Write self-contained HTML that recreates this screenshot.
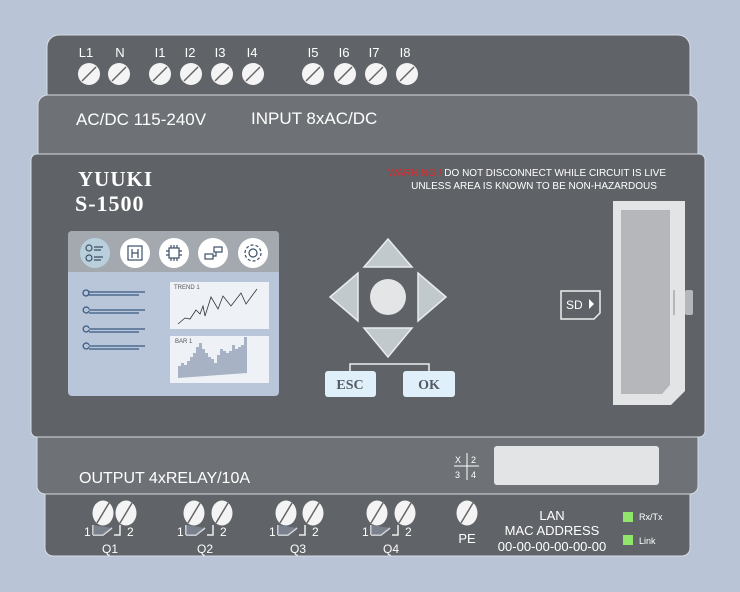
<!DOCTYPE html>
<html><head><meta charset="utf-8"><style>
html,body{margin:0;padding:0;background:#b9c4d7;}
svg{display:block}
text{font-family:"Liberation Sans Narrow","Liberation Sans",sans-serif;fill:#fff}
.s{font-family:"Liberation Serif",serif;font-weight:bold}
</style></head><body>
<svg width="740" height="592" viewBox="0 0 740 592" xmlns="http://www.w3.org/2000/svg">
<defs>
<g id="t"><circle r="11" fill="#f4f4f4"/><line x1="-7" y1="7" x2="7" y2="-7" stroke="#666" stroke-width="1.5"/></g>
<g id="b"><ellipse rx="10.5" ry="12.5" fill="#f4f4f4"/><line x1="-6" y1="10" x2="6" y2="-10" stroke="#666" stroke-width="1.5"/></g>
<g id="r"><text x="-31" y="28" font-size="12">1</text><path d="M-22 27 V17 M-22 27 H-12 L-3 20 M-1 27 H5 V17" stroke="#eee" stroke-width="1.5" fill="none"/><path d="M-22 17 V27 H-12 L-3 20 Z" fill="#8c95a6" opacity=".6"/><text x="12" y="28" font-size="12">2</text></g>
</defs>
<rect x="47" y="35" width="643" height="70" rx="12" fill="#606468" stroke="#d8dce3" stroke-width="1"/>
<g transform="translate(0,74)">
<use href="#t" x="89"/><use href="#t" x="119"/><use href="#t" x="160"/><use href="#t" x="191"/><use href="#t" x="222"/><use href="#t" x="253"/><use href="#t" x="313"/><use href="#t" x="345"/><use href="#t" x="376"/><use href="#t" x="407"/>
</g>
<g font-size="13" text-anchor="middle">
<text x="86" y="57">L1</text><text x="120" y="57">N</text><text x="160" y="57">I1</text><text x="190" y="57">I2</text><text x="220" y="57">I3</text><text x="252" y="57">I4</text><text x="313" y="57">I5</text><text x="344" y="57">I6</text><text x="374" y="57">I7</text><text x="405" y="57">I8</text>
</g>
<rect x="38" y="95" width="660" height="75" rx="10" fill="#6e7276" stroke="#d8dce3"/>
<text x="76" y="125" font-size="17">AC/DC 115-240V</text>
<text x="251" y="124" font-size="17">INPUT 8xAC/DC</text>
<rect x="45" y="480" width="645" height="76" rx="8" fill="#606468" stroke="#d8dce3"/>
<rect x="37" y="420" width="661" height="74" rx="8" fill="#6e7276" stroke="#d8dce3"/>
<rect x="31" y="154" width="674" height="283" rx="6" fill="#5f6367" stroke="#d8dce3"/>
<text class="s" x="78" y="186" font-size="21" letter-spacing="1">YUUKI</text>
<text class="s" x="75" y="211" font-size="22" letter-spacing="1">S-1500</text>
<text x="527" y="176" font-size="10" text-anchor="middle"><tspan fill="#e0262a">WARNING ! </tspan>DO NOT DISCONNECT WHILE CIRCUIT IS LIVE</text>
<text x="534" y="189" font-size="10" text-anchor="middle">UNLESS AREA IS KNOWN TO BE NON-HAZARDOUS</text>
<!-- screen -->
<rect x="68" y="231" width="211" height="165" rx="4" fill="#b9c6d9"/>
<path d="M68 272 V235 a4 4 0 0 1 4 -4 H275 a4 4 0 0 1 4 4 V272Z" fill="#a4a9af"/>
<circle cx="95" cy="253" r="15" fill="#b9d0dc"/>
<circle cx="135" cy="253" r="15" fill="#fff"/><circle cx="174" cy="253" r="15" fill="#fff"/><circle cx="213" cy="253" r="15" fill="#fff"/><circle cx="253" cy="253" r="15" fill="#fff"/>
<g stroke="#3c5066" stroke-width="1.2" fill="none">
<circle cx="89" cy="248" r="3"/><circle cx="89" cy="258" r="3"/><path d="M94 247h9M94 250h7M94 257h9M94 260h7"/>
<rect x="128" y="246" width="14" height="14"/><path d="M132 249v9M138 249v9M132 253h6"/>
<rect x="169" y="248" width="10" height="10"/><path d="M171 245v3M174 245v3M177 245v3M171 258v3M174 258v3M177 258v3M166 251h3M166 255h3M179 251h3M179 255h3"/>
<rect x="205" y="254" width="8" height="5"/><rect x="214" y="247" width="8" height="5"/><path d="M213 256h3v-4"/>
<circle cx="253" cy="253" r="4"/><circle cx="253" cy="253" r="8" stroke-dasharray="3 2"/>
</g>
<g stroke="#3c5a80" stroke-width="1.3" fill="none">
<circle cx="86" cy="293" r="3"/><path d="M89 292h56M89 295h50"/>
<path d="M89 309a3 3 0 1 0 0 2"/><path d="M89 310h56M89 313h50"/>
<path d="M89 328a3 3 0 1 0 0 2"/><path d="M89 329h56M89 332h50"/>
<path d="M89 345a3 3 0 1 0 0 2"/><path d="M89 346h56M89 349h50"/>
</g>
<rect x="170" y="282" width="99" height="47" fill="#eef2f7"/>
<text x="174" y="289" font-size="6" style="fill:#555">TREND 1</text>
<polyline points="178,324 185,318 190,319 196,310 200,314 203,306 205,316 211,297 218,309 223,296 231,306 241,293 246,304 257,289" fill="none" stroke="#333" stroke-width="0.8"/>
<rect x="170" y="336" width="99" height="47" fill="#eef2f7"/>
<text x="175" y="343" font-size="6" style="fill:#555">BAR 1</text>
<path fill="#a7b2c4" d="M178 378v-12h3v-3h3v2h3v-4h3v-4h3v-4h3v-6h3v-4h3v6h3v4h3v4h3v2h3v4h3v-8h3v-6h3v2h3v2h3v-2h3v-6h3v4h3v-2h3v-2h3v-8h3v36z"/>
<!-- dpad -->
<g fill="#c2c9cc" stroke="#e8ecef" stroke-width="1.5">
<polygon points="388,239 412,267 364,267"/><polygon points="388,357 412,328 364,328"/>
<polygon points="330,297 358,273 358,321"/><polygon points="446,297 418,273 418,321"/>
</g>
<circle cx="388" cy="297" r="18" fill="#e4e5e7"/>
<path d="M350 371V364H429V371" stroke="#eee" stroke-width="1.5" fill="none"/>
<rect x="325" y="371" width="51" height="26" rx="3" fill="#dff0fb"/><rect x="403" y="371" width="52" height="26" rx="3" fill="#dff0fb"/>
<text class="s" x="350" y="389" font-size="14" text-anchor="middle" style="fill:#555b62">ESC</text>
<text class="s" x="429" y="389" font-size="14" text-anchor="middle" style="fill:#555b62">OK</text>
<!-- sd -->
<path d="M561 291H600V313L594 319H561Z" fill="#5f6367" stroke="#eee" stroke-width="1.5"/>
<text x="566" y="309" font-size="12">SD</text><polygon points="589,299 589,309 594,304" fill="#fff"/>
<path d="M613 201H685V391L671 405H613Z" fill="#e3e4e6"/>
<path d="M621 210H670V385L662 394H621Z" fill="#b5b7ba"/>
<rect x="685" y="290" width="8" height="25" rx="2" fill="#b5b7ba"/>
<rect x="673" y="290" width="2" height="25" fill="#b5b7ba"/>
<!-- output -->
<text x="79" y="483" font-size="16">OUTPUT 4xRELAY/10A</text>
<path d="M454 466H479M467 453V480" stroke="#fff" stroke-width="1"/>
<text x="455" y="463" font-size="9">X</text><text x="471" y="463" font-size="9">2</text><text x="455" y="478" font-size="9">3</text><text x="471" y="478" font-size="9">4</text>
<rect x="494" y="446" width="165" height="39" rx="3" fill="#e3e4e6"/>
<!-- bottom -->
<g transform="translate(0,513)"><use href="#b" x="103"/><use href="#b" x="126"/><use href="#b" x="194"/><use href="#b" x="222"/><use href="#b" x="286"/><use href="#b" x="313"/><use href="#b" x="377"/><use href="#b" x="405"/><use href="#b" x="467"/></g>
<g transform="translate(0,508)"><use href="#r" x="115"/><use href="#r" x="208"/><use href="#r" x="300"/><use href="#r" x="393"/></g>
<g font-size="12" text-anchor="middle"><text x="110" y="553">Q1</text><text x="205" y="553">Q2</text><text x="298" y="553">Q3</text><text x="391" y="553">Q4</text><text x="467" y="543" font-size="13">PE</text>
<text x="552" y="520" font-size="13">LAN</text><text x="552" y="535" font-size="13">MAC ADDRESS</text><text x="552" y="551" font-size="13">00-00-00-00-00-00</text></g>
<rect x="623" y="512" width="10" height="10" fill="#8fe66b"/><rect x="623" y="535" width="10" height="10" fill="#8fe66b"/>
<text x="639" y="520" font-size="9">Rx/Tx</text><text x="639" y="544" font-size="9">Link</text>
</svg>
</body></html>
